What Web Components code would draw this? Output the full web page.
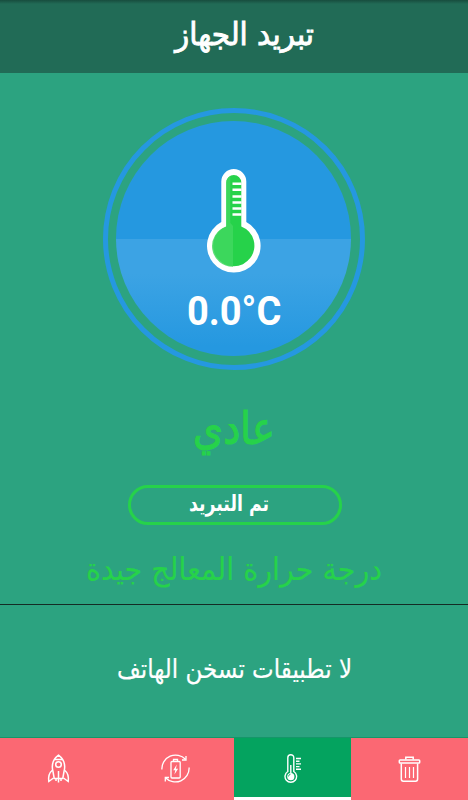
<!DOCTYPE html>
<html lang="ar">
<head>
<meta charset="utf-8">
<title>تبريد الجهاز</title>
<style>
body {
    margin: 0;
}
</style>
</head>
<body>
<cooler-app></cooler-app>
<script>
class TitleBar extends HTMLElement {
    constructor() {
        super();
        this.attachShadow({mode:'open'});
        this.shadowRoot.innerHTML = `
        <style>
        :host {
            display: flex;
            justify-content: center;
            height: 73px;
            flex: none;
            box-sizing: border-box;
            padding-left: 21px;
            background: linear-gradient(#174d3e, #216b56 4px);
            color: #fff;
        }
        </style>
        <slot></slot>
        `;
    }
}
customElements.define('title-bar', TitleBar);

// One line of Arabic text, fitted to a width given in pixels
class FitText extends HTMLElement {
    constructor() {
        super();
        this.attachShadow({mode:'open'});
    }
    connectedCallback() {
        const w = this.getAttribute('width');
        const h = this.getAttribute('height');
        const base = this.getAttribute('base');
        const size = this.getAttribute('size');
        const weight = this.getAttribute('weight') || 400;
        this.shadowRoot.innerHTML = `
        <style>
        :host {
            display: block;
            flex: none;
            width: ${w}px;
            height: ${h}px;
        }
        svg {
            display: block;
            overflow: visible;
        }
        text {
            font-family: "DejaVu Sans", sans-serif;
            font-size: ${size}px;
            font-weight: ${weight};
            fill: currentColor;
            stroke: currentColor;
            stroke-width: ${this.getAttribute('stroke') || 0};
            direction: rtl;
        }
        </style>
        <svg width="${w}" height="${h}">
            <text x="${w}" y="${base}" textLength="${w}" lengthAdjust="spacingAndGlyphs">${this.textContent.trim()}</text>
        </svg>
        `;
    }
}
customElements.define('fit-text', FitText);

class TempGauge extends HTMLElement {
    constructor() {
        super();
        this.attachShadow({mode:'open'});
        this.shadowRoot.innerHTML = `
        <style>
        :host {
            display: flex;
            flex: none;
            box-sizing: border-box;
            width: 262px;
            height: 262px;
            padding: 8px 9px 9px 8px;
            border: 5px solid #2598e0;
            border-radius: 50%;
        }
        .disc {
            flex: 1;
            display: flex;
            flex-direction: column;
            align-items: center;
            border-radius: 50%;
            background: linear-gradient(#2598e0 50%, #3ca3e4 50%, #3ca3e4 65%, #2598e0 96%);
        }
        svg {
            display: block;
            margin-top: 48px;
        }
        .value {
            margin-top: 15px;
            font: 700 40px/48px Roboto, sans-serif;
            color: #fff;
            white-space: nowrap;
            transform: translateX(.5px) scaleX(.95);
        }
        </style>
        <div class="disc">
            <svg width="54" height="104" viewBox="0 0 54 104">
                <path fill="#fff" d="M14.3 12.5a12.5 12.5 0 0 1 25 0V53a26.8 26.8 0 1 1-25 0z"/>
                <path fill="#26d24a" d="M19.3 13.5a7.5 7.5 0 0 1 15 0V57.5a20.6 20.6 0 1 1-15 0z"/>
                <path fill="#41d85f" d="M19.3 13.5a7.5 7.5 0 0 1 4-6.6V54L26 57V97.7A20.6 20.6 0 0 1 19.3 57.5z" opacity=".85"/>
                <path stroke="#fff" stroke-width="2.5" d="M25.5 14.8h9M25.5 20.8h9M25.5 27.5h9M25.5 33.5h9M25.5 39.5h9M25.5 45.5h9"/>
            </svg>
            <div class="value"><slot></slot></div>
        </div>
        `;
    }
}
customElements.define('temp-gauge', TempGauge);

class PillButton extends HTMLElement {
    constructor() {
        super();
        this.attachShadow({mode:'open'});
        this.shadowRoot.innerHTML = `
        <style>
        :host {
            display: flex;
            flex: none;
            justify-content: center;
            box-sizing: border-box;
            width: 214px;
            height: 40px;
            padding-right: 12px;
            border: 3px solid #26d24a;
            border-radius: 20px;
            color: #fff;
        }
        </style>
        <slot></slot>
        `;
    }
}
customElements.define('pill-button', PillButton);

const ICONS = {
    rocket: `<g stroke-width="1.5">
        <path d="M9 17.5C7.2 11 9.5 5 14.5 1.2 19.5 5 21.8 11 20 17.5L18.8 24.5H10.2z"/>
        <path d="M10.5 5.5h8"/><circle cx="14.5" cy="10.5" r="2.8"/>
        <path d="M8.6 16C5.5 18.5 4 22 4.8 27.5L9.5 24M20.4 16c3.1 2.5 4.6 6 3.8 11.5L19.5 24"/>
        <path d="M14.5 17v11.5M12 25v2M17 25v2"/></g>`,
    battery: `<g stroke-width="1.3">
        <path d="M.9 15.5A13.7 13.7 0 0 1 24.5 5.3M28.1 13.5A13.7 13.7 0 0 1 4.5 23.7"/>
        <path d="M21 6h4V2M8 23.5H4.3V27.5"/>
        <rect x="10" y="7.5" width="9.2" height="16.5" rx="1"/><path d="M12.5 7V5.5h4V7"/>
        </g><path fill="#fff" stroke="none" d="M15.8 10.5l-3.6 5.7h2.1l-.9 4.3 3.7-5.8h-2.2z"/>`,
    thermo: `<g stroke-width="1.4">
        <path d="M9.8 17.5V3.7a3 3 0 0 1 6 0V17.5a5.8 5.8 0 1 1-6 0z"/>
        <path d="M12.8 11v9"/><path d="M18 4.5h5M18 7.2h3.5M18 9.9h5M18 12.6h3.5M18 15.3h5"/>
        </g><circle cx="12.8" cy="22.7" r="3.6" fill="#fff" stroke="none"/>
        <path stroke="#04a35f" stroke-width=".8" d="M10.5 22.5q0-2 2-2.3"/>`,
    trash: `<g stroke-width="1.5">
        <rect x="4.3" y="5.9" width="20.4" height="3.2" rx=".8"/><path d="M10.8 5.5V3.3h7.4V5.5"/>
        <path d="M6.3 9.5V25q0 2.2 2 2.2h12.3q2 0 2-2.2V9.5"/>
        <path stroke-width="1.2" d="M10.5 13v11M14.5 13v11M18.5 13v11"/></g>`
};

class TabItem extends HTMLElement {
    constructor() {
        super();
        this.attachShadow({mode:'open'});
    }
    connectedCallback() {
        this.shadowRoot.innerHTML = `
        <style>
        :host {
            display: flex;
            flex: 1;
            justify-content: center;
            box-sizing: border-box;
            padding-top: 16px;
            background: #fb6873;
        }
        :host([active]) {
            background: #04a35f;
            border-bottom: 3px solid #fff;
        }
        svg {
            fill: none;
            stroke: #fff;
        }
        </style>
        <svg width="29" height="30" viewBox="0 0 29 30">${ICONS[this.getAttribute('icon')]}</svg>
        `;
    }
}
customElements.define('tab-item', TabItem);

class CoolerApp extends HTMLElement {
    constructor() {
        super();
        this.attachShadow({mode:'open'});
        this.shadowRoot.innerHTML = `
        <style>
        :host {
            display: flex;
            flex-direction: column;
            width: 468px;
            height: 800px;
            overflow: hidden;
            background: #2ca380;
        }
        main, section {
            display: flex;
            flex-direction: column;
            align-items: center;
            box-sizing: border-box;
        }
        main {
            height: 532px;
            padding-top: 35px;
            border-bottom: 1.5px solid #142c24;
            color: #26d24a;
        }
        section {
            flex: 1;
            padding-top: 50px;
            color: #fff;
        }
        .state {
            margin-top: 38px;
        }
        pill-button {
            margin: 22px 0 0 2px;
        }
        .note {
            margin-top: 25px;
        }
        nav {
            display: flex;
            height: 62px;
            flex: none;
            box-shadow: 0 -1px 0 #159669;
        }
        </style>
        <title-bar><fit-text width="139" height="73" base="45" size="31" stroke=".9">تبريد الجهاز</fit-text></title-bar>
        <main>
            <temp-gauge>0.0°C</temp-gauge>
            <fit-text class="state" width="82" height="55" base="36" size="45" stroke="1.1">عادي</fit-text>
            <pill-button><fit-text width="80" height="34" base="23" size="22" weight="700">تم التبريد</fit-text></pill-button>
            <fit-text class="note" width="296" height="50" base="30" size="31" stroke=".2">درجة حرارة المعالج جيدة</fit-text>
        </main>
        <section>
            <fit-text width="235" height="50" base="23" size="26" stroke=".2">لا تطبيقات تسخن الهاتف</fit-text>
        </section>
        <nav>
            <tab-item icon="rocket"></tab-item>
            <tab-item icon="battery"></tab-item>
            <tab-item icon="thermo" active></tab-item>
            <tab-item icon="trash"></tab-item>
        </nav>
        `;
    }
}
customElements.define('cooler-app', CoolerApp);
</script>
</body>
</html>
